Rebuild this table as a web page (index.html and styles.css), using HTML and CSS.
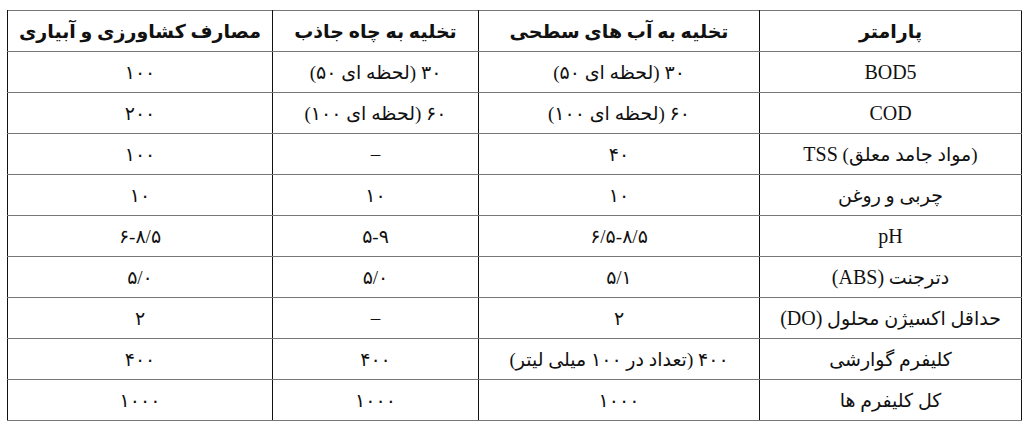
FILE: index.html
```html
<!DOCTYPE html>
<html lang="fa" dir="rtl">
<head>
<meta charset="utf-8">
<title>استاندارد خروجی فاضلاب</title>
<link rel="stylesheet" href="styles.css">
</head>
<body>
<table class="std-table">
  <colgroup>
    <col class="col-param">
    <col class="col-surface">
    <col class="col-well">
    <col class="col-agri">
  </colgroup>
  <thead>
    <tr>
      <th>پارامتر</th>
      <th>تخلیه به آب های سطحی</th>
      <th>تخلیه به چاه جاذب</th>
      <th>مصارف کشاورزی و آبیاری</th>
    </tr>
  </thead>
  <tbody>
    <tr><td><span class="lat">BOD5</span></td><td>۳۰ (لحظه ای ۵۰)</td><td>۳۰ (لحظه ای ۵۰)</td><td>۱۰۰</td></tr>
    <tr><td><span class="lat">COD</span></td><td>۶۰ (لحظه ای ۱۰۰)</td><td>۶۰ (لحظه ای ۱۰۰)</td><td>۲۰۰</td></tr>
    <tr><td>(مواد جامد معلق) <span class="lat">TSS</span></td><td>۴۰</td><td>–</td><td>۱۰۰</td></tr>
    <tr><td>چربی و روغن</td><td>۱۰</td><td>۱۰</td><td>۱۰</td></tr>
    <tr><td><span class="lat">pH</span></td><td>۶/۵-۸/۵</td><td>۵-۹</td><td>۶-۸/۵</td></tr>
    <tr><td>دترجنت <span class="lat">(ABS)</span></td><td>۵/۱</td><td>۵/۰</td><td>۵/۰</td></tr>
    <tr><td>حداقل اکسیژن محلول <span class="lat">(DO)</span></td><td>۲</td><td>–</td><td>۲</td></tr>
    <tr><td>کلیفرم گوارشی</td><td>۴۰۰ (تعداد در ۱۰۰ میلی لیتر)</td><td>۴۰۰</td><td>۴۰۰</td></tr>
    <tr><td>کل کلیفرم ها</td><td>۱۰۰۰</td><td>۱۰۰۰</td><td>۱۰۰۰</td></tr>
  </tbody>
</table>
</body>
</html>
```

FILE: styles.css
```css
html, body {
  margin: 0;
  padding: 0;
  background: #ffffff;
}

body {
  padding: 10px 8px 0 8px;
  font-family: "Liberation Serif", "DejaVu Sans", serif;
  color: #111111;
}

.std-table {
  width: 1014px;
  border-collapse: collapse;
  table-layout: fixed;
  border: 1px solid #555555;
}

.col-param { width: 262px; }
.col-surface { width: 281px; }
.col-well { width: 206px; }
.col-agri { width: 265px; }

.std-table th,
.std-table td {
  height: 40px;
  padding: 0 4px;
  text-align: center;
  vertical-align: middle;
  white-space: nowrap;
  border-left: 1px solid #111111;
  border-right: 1px solid #111111;
  border-top: 1px solid #777777;
  border-bottom: 1px solid #777777;
}

.std-table th {
  font-weight: bold;
  font-size: 19px;
}

.std-table td {
  font-weight: normal;
  font-size: 19px;
}

.std-table .lat {
  font-family: "Liberation Serif", serif;
  font-size: 20px;
}
```
